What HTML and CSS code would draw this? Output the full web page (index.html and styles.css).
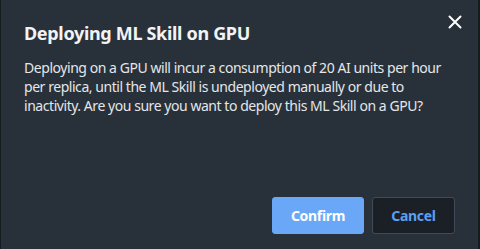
FILE: index.html
```html
<!DOCTYPE html>
<html lang="en">
<head>
  <meta charset="UTF-8">
  <title>Deploying ML Skill on GPU</title>
  <link rel="stylesheet" href="styles.css">
</head>
<body>
  <!-- confirmation dialog -->
  <div class="dialog">
    <button class="close-btn" aria-label="Close">
      <svg width="14" height="14" viewBox="0 0 14 14">
        <path d="M1.5 1.5 L12.5 12.5 M12.5 1.5 L1.5 12.5" stroke="#ffffff" stroke-width="2" stroke-linecap="round"/>
      </svg>
    </button>
    <h2 class="dialog-title">Deploying ML Skill on GPU</h2>
    <p class="dialog-body">Deploying on a GPU will incur a consumption of 20 AI units per hour per replica, until the ML Skill is undeployed manually or due to inactivity. Are you sure you want to deploy this ML Skill on a GPU?</p>
    <div class="dialog-footer">
      <button class="btn btn-primary">Confirm</button>
      <button class="btn btn-secondary">Cancel</button>
    </div>
  </div>
</body>
</html>
```

FILE: styles.css
```css
/* page behind the dialog */
html, body {
  height: 100%;
}
body {
  margin: 0;
  padding: 0 2px 0 1px;
  background-color: #161b20;
  font-family: "Noto Sans", "Open Sans", sans-serif;
  box-sizing: border-box;
  overflow: hidden;
}
/* dialog box */
.dialog {
  position: relative;
  height: 100%;
  box-sizing: border-box;
  background-color: #28313a;
  padding: 19px 23px 15px 23px;
  display: flex;
  flex-direction: column;
  color: #e8eaed;
}
.close-btn {
  position: absolute;
  top: 14px;
  right: 15px;
  width: 16px;
  height: 16px;
  padding: 0;
  border: none;
  background: none;
  display: flex;
  align-items: center;
  justify-content: center;
  cursor: pointer;
}
.dialog-title {
  margin: 0;
  font-size: 18px;
  font-weight: 700;
  line-height: 28px;
  letter-spacing: -0.32px;
  color: #f2f3f5;
}
.dialog-body {
  margin: 11px 0 0 0;
  font-size: 14px;
  line-height: 19px;
  letter-spacing: -0.45px;
  color: #e4e6e9;
}
/* buttons */
.dialog-footer {
  margin-top: auto;
  display: flex;
  justify-content: flex-end;
  gap: 8px;
}
.btn {
  height: 37px;
  border-radius: 3px;
  font-family: inherit;
  font-size: 14px;
  font-weight: 700;
  letter-spacing: -0.3px;
  cursor: pointer;
}
.btn-primary {
  width: 92px;
  background-color: #6aa8f7;
  color: #ffffff;
  border: 1px solid #6aa8f7;
}
.btn-secondary {
  width: 83px;
  background-color: #1b2027;
  color: #5c9ff2;
  border: 1px solid #424b55;
}
```
